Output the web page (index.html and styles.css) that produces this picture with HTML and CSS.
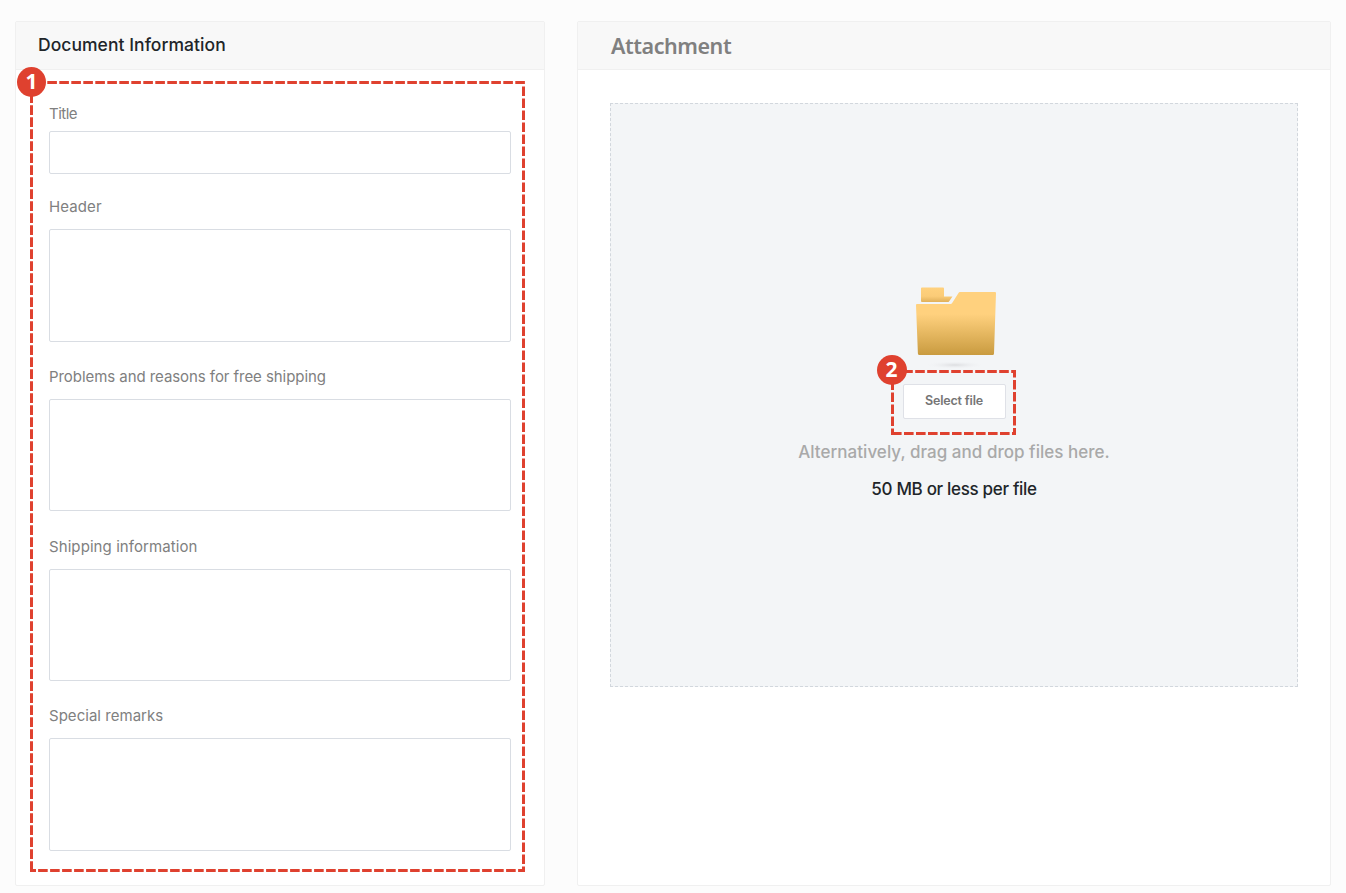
FILE: index.html
```
<!DOCTYPE html>
<html lang="en">
<head>
<meta charset="utf-8">
<title>Document Information</title>
<link rel="stylesheet" href="styles.css">
</head>
<body>
<main class="page">
  <section class="panel panel-info">
    <header class="panel-head"><h2 class="info-title">Document Information</h2></header>
    <form class="fields">
      <div class="field field-short"><label class="label l-title" for="f1">Title</label><input class="control" id="f1" type="text"></div>
      <div class="field"><label class="label l-header" for="f2">Header</label><textarea class="control" id="f2"></textarea></div>
      <div class="field"><label class="label l-problems" for="f3">Problems and reasons for free shipping</label><textarea class="control" id="f3"></textarea></div>
      <div class="field"><label class="label l-shipping" for="f4">Shipping information</label><textarea class="control" id="f4"></textarea></div>
      <div class="field"><label class="label l-remarks" for="f5">Special remarks</label><textarea class="control" id="f5"></textarea></div>
    </form>
    <svg class="callout callout-form" width="495" height="791" viewBox="30 81 495 791">
      <g class="dash">
        <path d="M47.3 82.5H525"/>
        <path d="M31.5 93.3V872"/>
        <path d="M523.5 86.4V872"/>
        <path d="M38.1 870.5H525"/>
        <path d="M30 870.5H36"/>
      </g>
    </svg>
    <span class="badge badge-form">1</span>
  </section>
  <section class="panel panel-attach">
    <header class="panel-head"><h2 class="attach-title">Attachment</h2></header>
    <div class="drop">
      <svg class="folder" width="90" height="84" viewBox="911 284 90 84">
        <defs>
          <linearGradient id="front" x1="0" y1="0" x2="0" y2="1"><stop offset="0" stop-color="#ffd17e"/><stop offset=".35" stop-color="#ffd17e"/><stop offset="1" stop-color="#c99b40"/></linearGradient>
          <linearGradient id="back" x1="0" y1="0" x2="0" y2="1"><stop offset="0" stop-color="#ffd17e"/><stop offset=".6" stop-color="#fbcc78"/><stop offset="1" stop-color="#e0b05a"/></linearGradient>
          <radialGradient id="shade"><stop offset="0" stop-color="#dcdde0"/><stop offset="1" stop-color="#f3f5f7" stop-opacity="0"/></radialGradient>
        </defs>
        <ellipse cx="955" cy="365" rx="30" ry="4" fill="url(#shade)"/>
        <path d="M921 288Q921 287.500 922 287.500H943Q944 287.500 944 288.500V296.500H952.500L949 301.500Q948.500 302 948 302H922Q921 302 921 301Z" fill="url(#back)"/>
        <path d="M917 304H950.500Q951.500 304 952 303.200L958.500 293Q959 292 960 292H995Q996 292 996 293L994 353.500Q994 355 992.500 355H919.500Q918 355 917.900 353.500L916 305Q916 304 917 304Z" fill="url(#front)"/>
      </svg>
      <div class="select-wrap">
        <button class="select" type="button">Select file</button>
        <svg class="callout callout-select" width="125" height="65" viewBox="891 370 125 65">
          <g class="dash">
            <path d="M903.200 371.500H1016"/><path d="M892.500 380.400V435"/><path d="M1014.500 368V435"/><path d="M892 433.500H1016"/>
          </g>
        </svg>
        <span class="badge badge-select">2</span>
      </div>
      <p class="hint">Alternatively, drag and drop files here.</p>
      <p class="limit">50 MB or less per file</p>
    </div>
  </section>
</main>
</body>
</html>
```
FILE: styles.css
```
* { box-sizing: border-box; }
body { margin: 0; background: #fcfcfc; font-family: Inter, "Open Sans", sans-serif; overflow: hidden; }
.page { height: 893px; padding: 21px 15px 7px 15px; display: grid; grid-template-columns: 530px 754px; column-gap: 32px; }
.panel { position: relative; background: #fff; border: 1px solid #f0f0f0; border-radius: 2px; }
.panel-head { height: 48px; background: #f8f8f8; border-bottom: 1px solid #f0f0f0; display: flex; align-items: center; padding: 0 0 2px 22px; }
.panel-attach .panel-head { padding: 0 0 0 33px; }
h2, p { margin: 0; white-space: nowrap; }
.info-title { font-size: 17.500px; font-weight: 450; color: #212529; letter-spacing: 0.050px; }
.attach-title { font: 600 21.500px "Noto Sans", sans-serif; color: #808080; letter-spacing: -0.45px; }
.fields { padding: 32px 33px 0; display: flex; flex-direction: column; gap: 23.200px; }
.field { display: flex; flex-direction: column; gap: 10.200px; }
.field-short { gap: 5px; margin-bottom: -2px; }
.label { height: 24px; line-height: 24px; font-size: 15px; color: #808080; white-space: nowrap; }
.l-title { letter-spacing: -0.5px; }
.l-header { letter-spacing: 0.1px; }
.l-problems { letter-spacing: -0.060px; }
.l-shipping { letter-spacing: 0.080px; }
.l-remarks { letter-spacing: 0.030px; }
.control { display: block; width: 462px; height: 112.300px; margin: 0; border: 1px solid #d9dde3; border-radius: 2px; background: #fff; resize: none; outline: 0; }
input.control { height: 43px; }
.callout { position: absolute; pointer-events: none; }
.callout-form { left: 14px; top: 59px; }
.callout-select { left: -12px; top: -14px; }
.dash { fill: none; stroke: #df412f; stroke-width: 3; stroke-dasharray: 9.600 2.400; }
.badge { position: absolute; width: 30px; height: 30px; border-radius: 50%; background: #df412f; color: #fff; font: 700 21px/29px "Noto Sans", sans-serif; text-align: center; }
.badge-form { left: 1px; top: 45px; width: 29px; }
.badge-select { left: -26px; top: -29px; }
.drop { margin: 33px 0 0 32px; width: 688px; height: 584px; background: #f3f5f7; border: 1px dashed #d2d7dd; display: flex; flex-direction: column; align-items: center; padding-top: 180px; }
.folder { display: block; margin-left: 3px; }
.select-wrap { position: relative; margin-top: 16px; }
.select { display: block; width: 103px; height: 35px; padding: 0 0 2px; border: 1px solid #dfe1e7; border-radius: 2px; background: #fff; font: 600 12.500px Inter, sans-serif; color: #757575; letter-spacing: -0.180px; }
.hint { margin-top: 20px; line-height: 26px; font-size: 17px; font-weight: 500; color: #a9a9a9; letter-spacing: 0.030px; }
.limit { margin-top: 11px; line-height: 26px; font-size: 17px; font-weight: 500; color: #212529; letter-spacing: -0.320px; }
```
